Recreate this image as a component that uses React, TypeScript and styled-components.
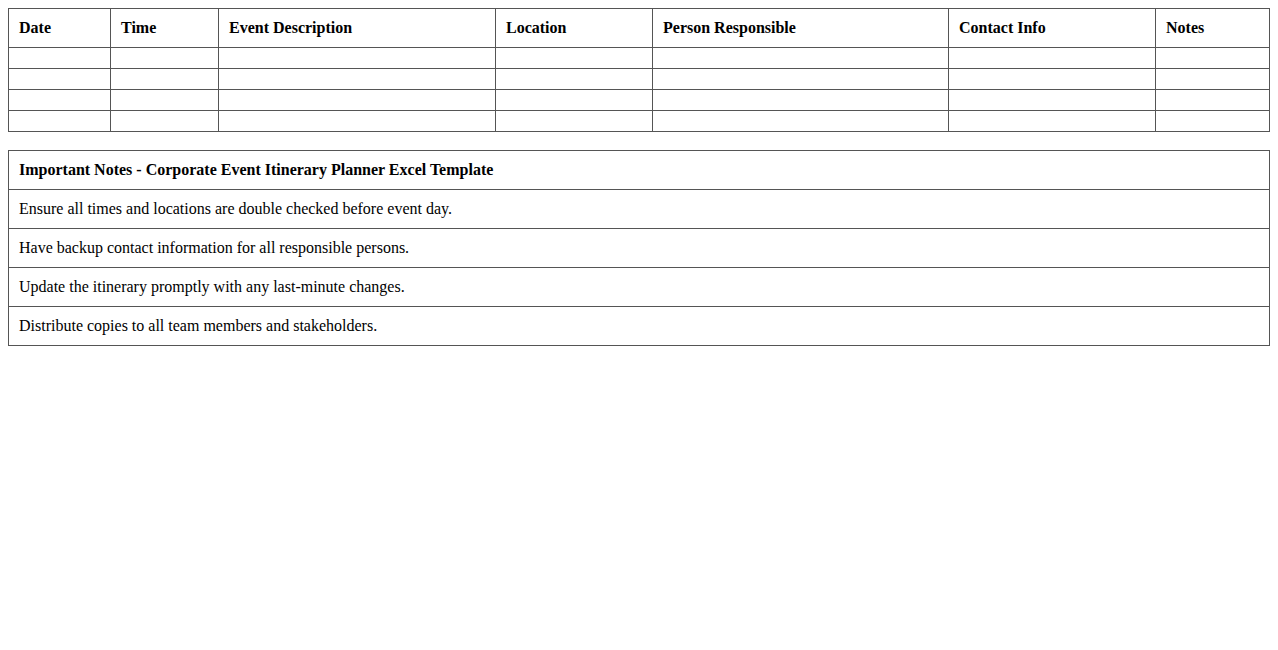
import styled, { createGlobalStyle } from 'styled-components'

const GlobalStyle = createGlobalStyle`
  body {
    margin: 8px;
    font-family: "Liberation Serif", "Times New Roman", serif;
    font-size: 16px;
    color: #000;
    background: #fff;
  }
`

const columns = [
  { label: 'Date', width: 102 },
  { label: 'Time', width: 108 },
  { label: 'Event Description', width: 277 },
  { label: 'Location', width: 157 },
  { label: 'Person Responsible', width: 296 },
  { label: 'Contact Info', width: 207 },
  { label: 'Notes' },
]

const notes = [
  'Ensure all times and locations are double checked before event day.',
  'Have backup contact information for all responsible persons.',
  'Update the itinerary promptly with any last-minute changes.',
  'Distribute copies to all team members and stakeholders.',
]

export default function App() {
  return (
    <>
      <GlobalStyle />
      <Table>
        <colgroup>
          {columns.map(c => (
            <col key={c.label} style={c.width ? { width: c.width } : undefined} />
          ))}
        </colgroup>
        <thead>
          <tr>
            {columns.map(c => (
              <HeadCell key={c.label}>{c.label}</HeadCell>
            ))}
          </tr>
        </thead>
        <tbody>
          {[0, 1, 2, 3].map(r => (
            <tr key={r}>
              {columns.map(c => (
                <Cell key={c.label} />
              ))}
            </tr>
          ))}
        </tbody>
      </Table>

      <NotesTable>
        <thead>
          <tr>
            <HeadCell>Important Notes - Corporate Event Itinerary Planner Excel Template</HeadCell>
          </tr>
        </thead>
        <tbody>
          {notes.map(n => (
            <tr key={n}>
              <Cell>{n}</Cell>
            </tr>
          ))}
        </tbody>
      </NotesTable>
    </>
  )
}

const Table = styled.table`
  width: 100%;
  border-collapse: collapse;
  table-layout: fixed;
`

const NotesTable = styled(Table)`
  margin-top: 18px;
`

const HeadCell = styled.th`
  border: 1px solid #555;
  padding: 10px;
  text-align: left;
  font-weight: bold;
`

const Cell = styled.td`
  border: 1px solid #555;
  padding: 10px;
  text-align: left;
`
